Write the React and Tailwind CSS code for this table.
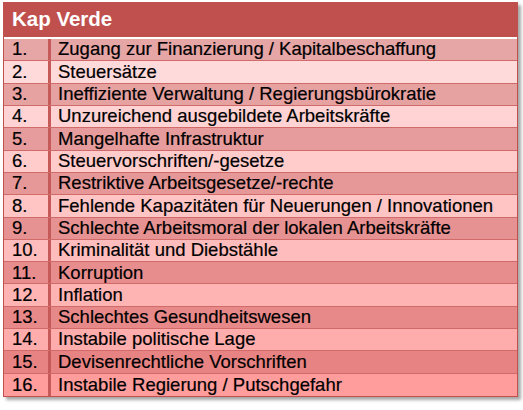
const ROWS = [
  'Zugang zur Finanzierung / Kapitalbeschaffung',
  'Steuersätze',
  'Ineffiziente Verwaltung / Regierungsbürokratie',
  'Unzureichend ausgebildete Arbeitskräfte',
  'Mangelhafte Infrastruktur',
  'Steuervorschriften/-gesetze',
  'Restriktive Arbeitsgesetze/-rechte',
  'Fehlende Kapazitäten für Neuerungen / Innovationen',
  'Schlechte Arbeitsmoral der lokalen Arbeitskräfte',
  'Kriminalität und Diebstähle',
  'Korruption',
  'Inflation',
  'Schlechtes Gesundheitswesen',
  'Instabile politische Lage',
  'Devisenrechtliche Vorschriften',
  'Instabile Regierung / Putschgefahr',
]

// row colours darken from pale pink at the top to salmon at the bottom
const ROW_BG = [
  'bg-[#e6a6a6]', 'bg-[#ffdada]',
  'bg-[#e6a1a1]', 'bg-[#ffd3d3]',
  'bg-[#e69c9c]', 'bg-[#ffcbcb]',
  'bg-[#e69797]', 'bg-[#ffc4c4]',
  'bg-[#e79292]', 'bg-[#ffbcbc]',
  'bg-[#e78d8d]', 'bg-[#ffb4b4]',
  'bg-[#e88989]', 'bg-[#ffacac]',
  'bg-[#e88383]', 'bg-[#ff9c9c]',
]

export default function App() {
  return (
    <div className="w-[523px] h-[410px] bg-white pt-[2px] pl-[3px] font-['Liberation_Sans',Arial,sans-serif] text-black">
      <div className="w-[515px] shadow-[3px_3px_3px_rgba(0,0,0,0.35)] border-x border-b border-[#c0504d]">
        {/* header */}
        <div className="h-[37px] bg-[#c0504d] flex items-center pl-[8px] border-b-2 border-white">
          <span className="text-white font-bold text-[20.5px] leading-none">Kap Verde</span>
        </div>

        {/* rows */}
        <div className="grid grid-rows-16 h-[357px] [-webkit-text-stroke:0.2px_black]">
          {ROWS.map((text, i) => (
            <div
              key={i}
              className={`flex ${ROW_BG[i]} ${i < ROWS.length - 1 ? 'border-b border-[#d16b69]' : ''}`}
            >
              <div className="w-[44px] flex items-center pl-[8px] text-[18.5px] leading-none">
                {i + 1}.
              </div>
              <div className="flex-1 flex items-center pl-[7px] border-l-[3px] border-[#c65a58] text-[18.5px] leading-none whitespace-nowrap">
                {text}
              </div>
            </div>
          ))}
        </div>
      </div>
    </div>
  )
}
